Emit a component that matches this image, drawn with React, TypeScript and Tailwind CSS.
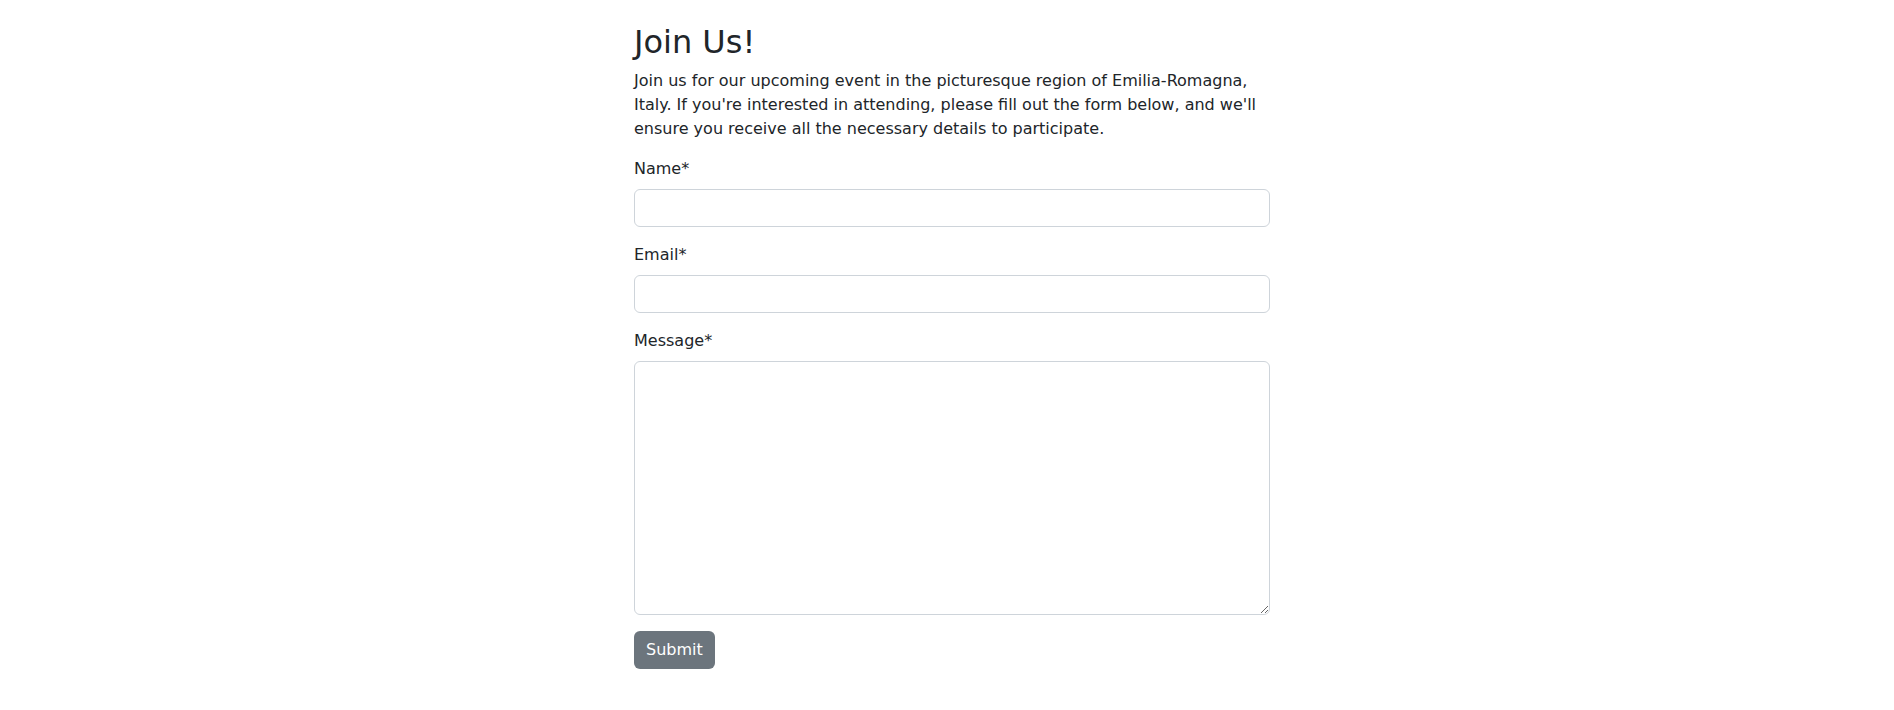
import React from "react";

const fieldClass =
  "block w-full rounded-md border border-[#ced4da] bg-white px-3 py-1.5 text-base leading-6 text-[#212529] outline-none focus:border-[#86b7fe]";

const Field = ({ label, id, children }: { label: string; id: string; children: React.ReactNode }) => (
  <div className="mb-4">
    <label htmlFor={id} className="mb-2 block text-base leading-6">
      {label}
    </label>
    {children}
  </div>
);

export default function App() {
  return (
    <div className="min-h-screen bg-white text-[#212529] font-['DejaVu_Sans',_'Open_Sans',_sans-serif]">
      <div className="mx-auto w-[646px] pl-[10px] pt-[23px]">
        <h2 className="mb-2 text-[32px] font-medium leading-[38.4px]">Join Us!</h2>
        <p className="mb-4 text-base leading-6">
          Join us for our upcoming event in the picturesque region of Emilia-Romagna, Italy. If you're interested in
          attending, please fill out the form below, and we'll ensure you receive all the necessary details to
          participate.
        </p>
        <form onSubmit={(e) => e.preventDefault()}>
          <Field label="Name*" id="name">
            <input id="name" type="text" className={`${fieldClass} h-[38px]`} />
          </Field>
          <Field label="Email*" id="email">
            <input id="email" type="email" className={`${fieldClass} h-[38px]`} />
          </Field>
          <Field label="Message*" id="message">
            <textarea id="message" rows={10} className={`${fieldClass} resize-y h-[254px]`} />
          </Field>
          <button
            type="submit"
            className="h-[38px] rounded-md bg-[#6c757d] px-3 text-base leading-6 text-white hover:bg-[#5c636a]"
          >
            Submit
          </button>
        </form>
      </div>
    </div>
  );
}
